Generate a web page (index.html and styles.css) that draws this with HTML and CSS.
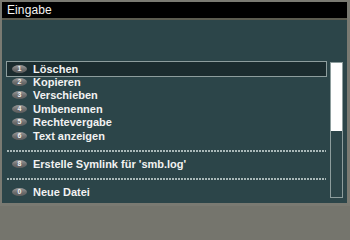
FILE: index.html
```html
<!DOCTYPE html>
<html>
<head>
<meta charset="utf-8">
<link rel="stylesheet" href="styles.css">
</head>
<body>
<div class="window">
  <div class="title">Eingabe</div>
  <div class="content">
    <div class="list">
      <div class="row selected"><span class="badge">1</span><span class="label">Löschen</span></div>
      <div class="row"><span class="badge">2</span><span class="label">Kopieren</span></div>
      <div class="row"><span class="badge">3</span><span class="label">Verschieben</span></div>
      <div class="row"><span class="badge">4</span><span class="label">Umbenennen</span></div>
      <div class="row"><span class="badge">5</span><span class="label">Rechtevergabe</span></div>
      <div class="row"><span class="badge">6</span><span class="label">Text anzeigen</span></div>
      <div class="sep"></div>
      <div class="row"><span class="badge">8</span><span class="label">Erstelle Symlink für 'smb.log'</span></div>
      <div class="sep"></div>
      <div class="row"><span class="badge">0</span><span class="label">Neue Datei</span></div>
    </div>
    <div class="scrollbar"><div class="thumb"></div></div>
  </div>
</div>
</body>
</html>
```
FILE: styles.css
```css
html, body {
  margin: 0;
  padding: 0;
  width: 350px;
  height: 206px;
  overflow: hidden;
  background: #75756d;
}
.window {
  box-sizing: border-box;
  width: 350px;
  height: 206px;
  border-style: solid;
  border-color: #7a7a72;
  border-width: 2px 3px 3px 2px;
  display: flex;
  flex-direction: column;
  font-family: "Liberation Sans", Arial, sans-serif;
}
.title {
  height: 16px;
  background: #000;
  color: #f4f4f4;
  font-size: 12px;
  line-height: 16px;
  padding-left: 5px;
  border-bottom: 2px solid #5c5c50;
  letter-spacing: 0.1px;
}
.content {
  flex: 1;
  background: #2c4549;
  display: flex;
  padding: 42px 4px 5px 4px;
  box-sizing: border-box;
}
.list {
  flex: 1;
  display: flex;
  flex-direction: column;
}
.row {
  height: 13.4px;
  display: flex;
  align-items: center;
  padding-left: 6px;
  color: #f2f2f2;
  font-size: 11px;
  font-weight: bold;
  white-space: nowrap;
}
.row.selected {
  box-sizing: border-box;
  height: 16px;
  margin: -1.3px 0;
  padding-left: 5px;
  background: #1b2c2f;
  border: 1px solid #8d9d9d;
}
.badge {
  width: 15px;
  height: 8px;
  border-radius: 50%;
  background: linear-gradient(#9a9a9a, #6a6a6a 60%, #5e5e5e);
  color: #f0f0f0;
  font-size: 7px;
  line-height: 8px;
  text-align: center;
  margin-right: 6px;
  flex: none;
}
.sep {
  height: 2px;
  margin: 7.3px 1px 5.3px 1px;
  background: repeating-linear-gradient(90deg, #a9b8b8 0 2px, transparent 2px 3px);
}
.scrollbar {
  box-sizing: border-box;
  width: 13px;
  margin-left: 3px;
  margin-top: 0px;
  border: 1px solid #8d9d9d;
  display: flex;
  flex-direction: column;
}
.thumb {
  height: 68px;
  background: #ffffff;
}
```
